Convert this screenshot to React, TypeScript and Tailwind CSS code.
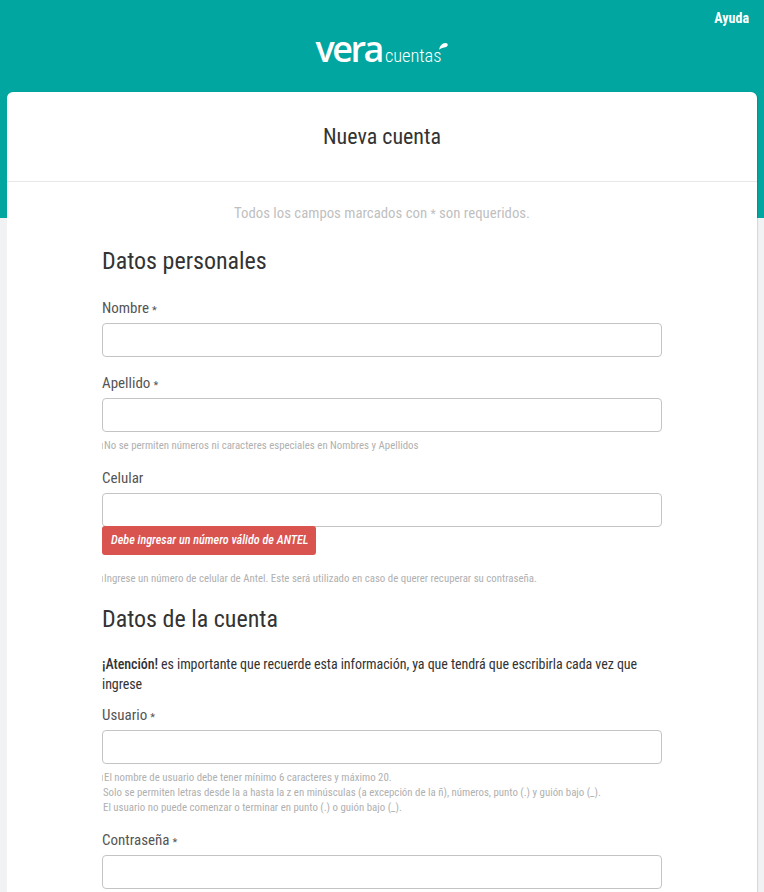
import React from "react";

const Label = ({ text, req = true, className = "" }: { text: string; req?: boolean; className?: string }) => (
  <label className={`block text-[15px] leading-[20px] text-[#555] ${className}`}>
    {text}
    {req && <span className="ml-[3px] align-[-1px] text-[11px] leading-[0] text-[#555]">*</span>}
  </label>
);

const Input = () => (
  <input
    type="text"
    className="block w-full h-[34px] rounded-[4px] border border-[#c4c4c4] bg-white"
  />
);

const Mark = () => <i className="mr-px inline-block h-[6px] w-px bg-[#cfcfcf] align-middle" />;

const Help = ({ children, className = "" }: { children: React.ReactNode; className?: string }) => (
  <p className={`text-[10.85px] leading-[15px] text-[#b0b0b0] ${className}`}>{children}</p>
);

export default function App() {
  return (
    <div className="h-[892px] overflow-hidden bg-[#f1f2f4] font-['Roboto',sans-serif] font-stretch-condensed">
      <header className="relative h-[218px] bg-[#00a69f]">
        <a className="absolute right-[15px] top-[10px] text-[14px] leading-[17px] font-bold text-white">
          Ayuda
        </a>
        <div className="flex justify-center pt-[25px]">
          <div className="relative flex items-baseline text-white pr-[7px]">
            <span className="font-['Open_Sans',sans-serif] font-stretch-normal text-[36px] leading-[48px] font-semibold tracking-[-2.5px]">vera</span>
            <span className="ml-[3px] text-[18.5px] leading-[20px] font-light tracking-[-0.1px]">cuentas</span>
            <svg className="absolute right-0 top-[18px]" width="9" height="7" viewBox="0 0 9 7">
              <path d="M0.2 6.8C0.6 3 3 0.2 6.5 0.1C8.8 0 9.5 2.4 7.9 3.6C5.8 5 2.6 4.4 0.2 6.8Z" fill="#fff" />
            </svg>
          </div>
        </div>
      </header>

      <main className="relative mx-[7px] mt-[-126px] w-[750px] rounded-t-[6px] bg-white pb-[40px] shadow-[1px_0_1px_rgba(0,0,0,0.12)]">
        <div className="flex h-[90px] items-center justify-center border-b border-[#e8e8e8]">
          <h1 className="text-[22px] font-normal text-[#333]">Nueva cuenta</h1>
        </div>

        <div className="px-[95px]">
          <p className="pt-[21px] text-center text-[14.8px] leading-[20px] text-[#bfbfbf]">
            Todos los campos marcados con <span className="text-[12px] leading-[0]">*</span> son requeridos.
          </p>

          <h2 className="mt-[22px] text-[24px] leading-[32px] font-normal text-[#333]">Datos personales</h2>

          <Label text="Nombre" className="mt-[21px] mb-[5px]" />
          <Input />

          <Label text="Apellido" className="mt-[16px] mb-[5px]" />
          <Input />
          <Help className="mt-[6px]"><Mark />No se permiten números ni caracteres especiales en Nombres y Apellidos</Help>

          <Label text="Celular" req={false} className="mt-[15px] mb-[5px]" />
          <Input />
          <div className="mt-[-1px] flex h-[29px] w-[214px] items-center rounded-[3px] bg-[#d9534f] pl-[9px] text-[12.2px] font-medium italic text-white">
            Debe ingresar un número válido de ANTEL
          </div>
          <Help className="mt-[16px]"><Mark />Ingrese un número de celular de Antel. Este será utilizado en caso de querer recuperar su contraseña.</Help>

          <h2 className="mt-[17px] text-[24px] leading-[32px] font-normal text-[#333]">Datos de la cuenta</h2>

          <p className="mt-[19px] text-[14px] leading-[20px] text-[#333] tracking-[-0.07px]">
            <b className="font-medium">¡Atención!</b> es importante que recuerde esta información, ya que tendrá que escribirla cada vez que ingrese
          </p>

          <Label text="Usuario" className="mt-[11px] mb-[5px]" />
          <Input />
          <Help className="mt-[6px]">
            <Mark />El nombre de usuario debe tener mínimo 6 caracteres y máximo 20.
            <br />
            <span className="pl-px">Solo se permiten letras desde la a hasta la z en minúsculas (a excepción de la ñ), números, punto (.) y guión bajo (_).</span>
            <br />
            <span className="pl-px">El usuario no puede comenzar o terminar en punto (.) o guión bajo (_).</span>
          </Help>

          <Label text="Contraseña" className="mt-[15px] mb-[5px]" />
          <Input />
        </div>
      </main>
    </div>
  );
}
